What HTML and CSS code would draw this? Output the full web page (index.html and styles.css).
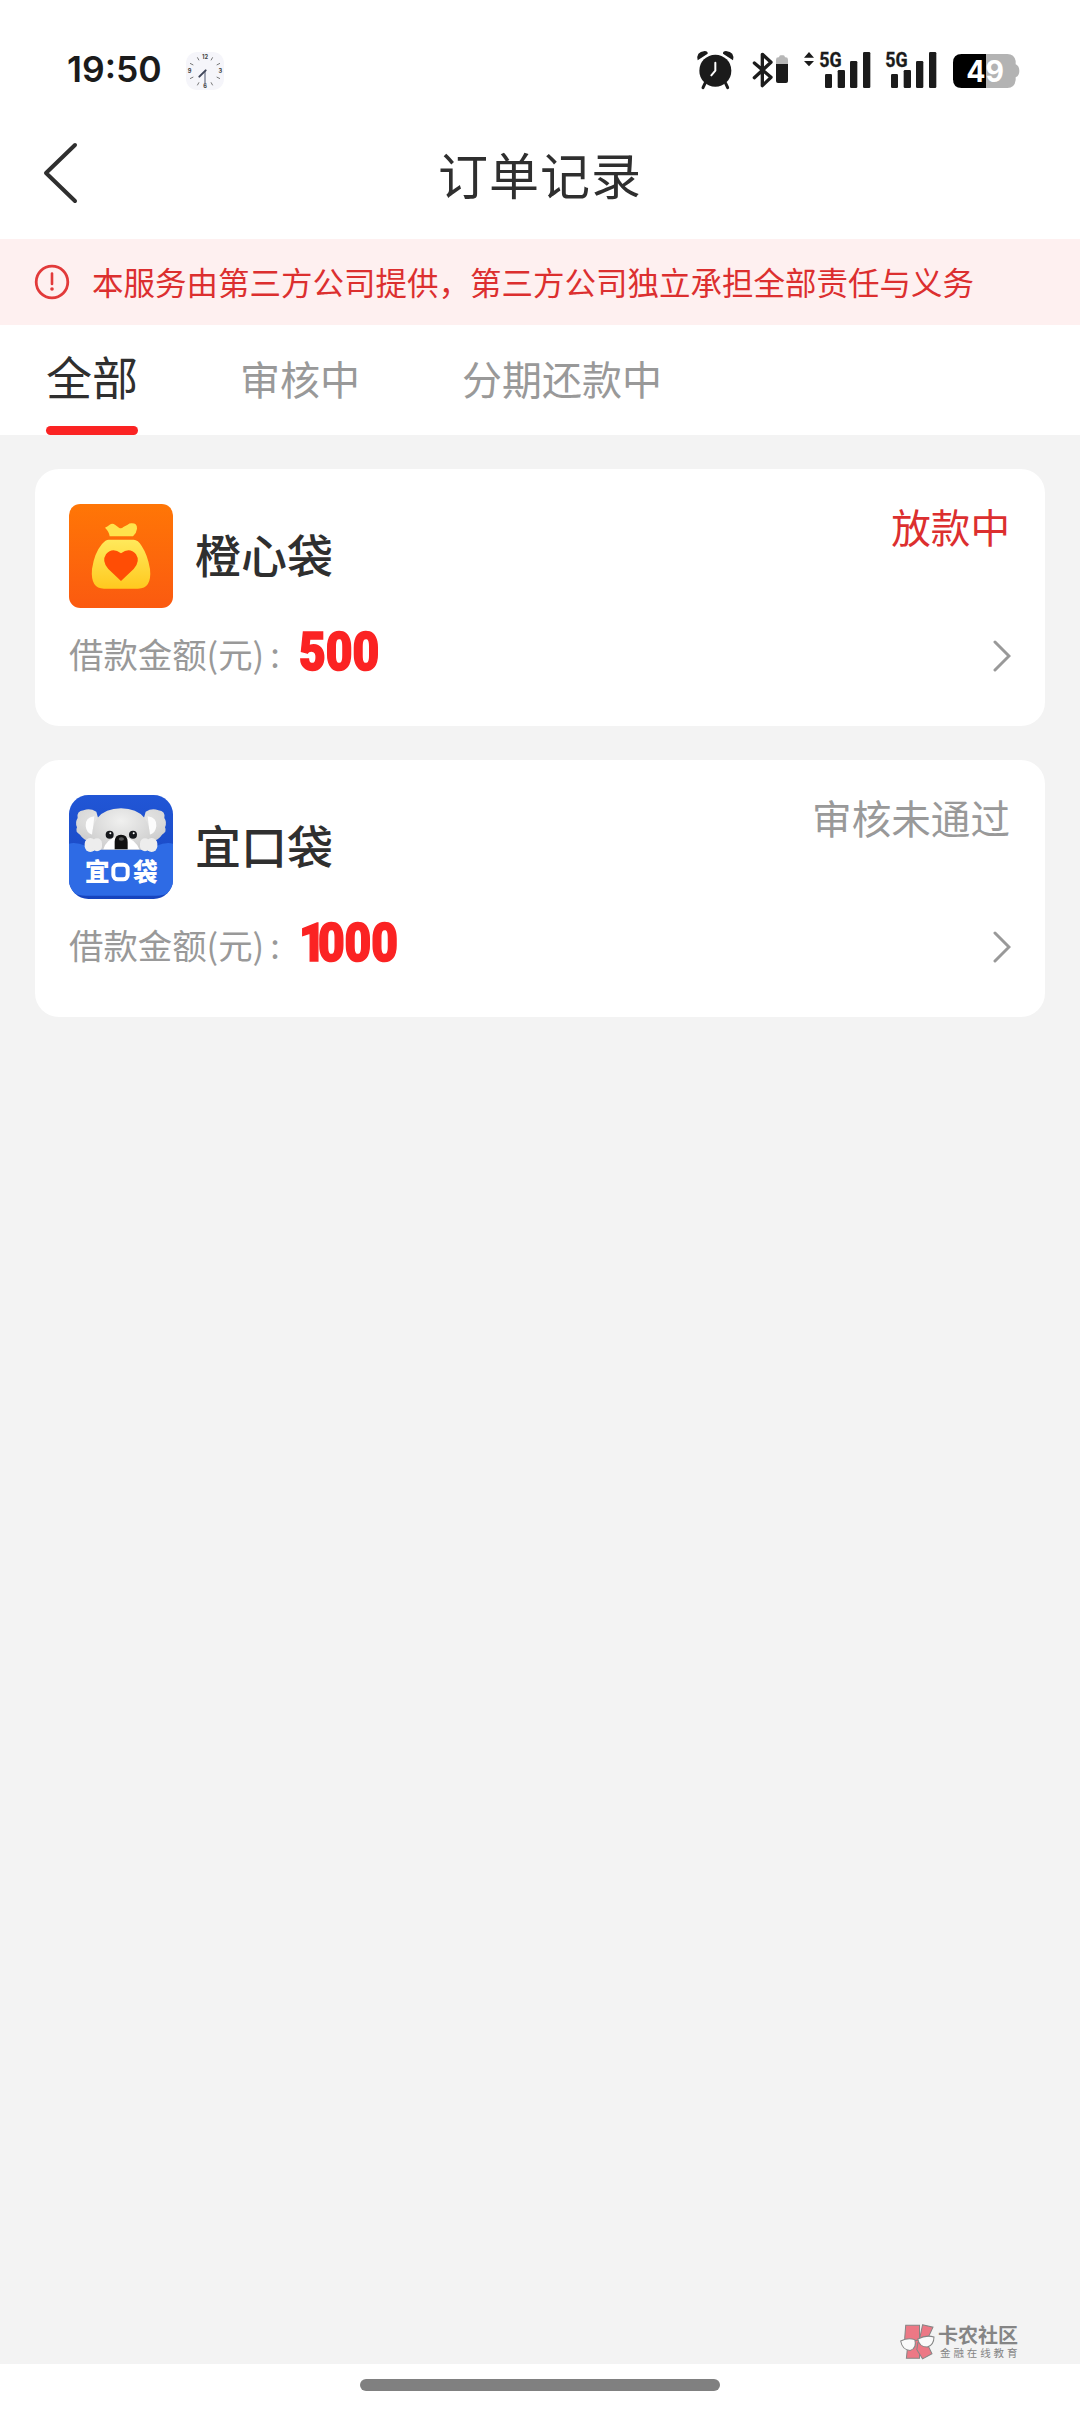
FILE: index.html
```html
<!DOCTYPE html>
<html lang="zh-CN">
<head>
<meta charset="utf-8">
<title>订单记录</title>
<link rel="stylesheet" href="styles.css">
</head>
<body>
<div class="screen">
  <div class="statusbar">
    <span class="time">19:50</span>
    <svg class="clock" viewBox="0 0 114 114">
      <rect width="114" height="114" rx="34" fill="#f5f5fa"/>
      <g stroke="#777" stroke-width="3"><path d="M34 16l5 9M80 16l-5 9M12 34l10 5M102 34l-10 5M12 80l10-5M102 80l-10-5M34 100l5-9M80 100l-5-9"/></g>
      <g class="dial"><text x="57" y="21">12</text><text x="103" y="63">3</text><text x="57" y="108">6</text><text x="11" y="63">9</text></g>
      <path d="M57 57V98" stroke="#777d92" stroke-width="4"/><path d="M59 55L40 74" stroke="#40465a" stroke-width="6" stroke-linecap="round"/>
    </svg>
    <svg class="indicators" viewBox="0 0 1080 210">
      <g fill="#1b1b1b">
        <circle cx="106" cy="107" r="48"/>
        <path d="M53 76Q47 51 74 48Q84 49 83 56ZM159 76Q165 51 138 48Q128 49 129 56Z"/>
        <path d="M75 145l-6 13M137 145l6 13" stroke="#1b1b1b" stroke-width="9" stroke-linecap="round"/>
      </g>
      <path d="M106 83v24L94 121" fill="none" stroke="#fff" stroke-width="6" stroke-linecap="round" stroke-linejoin="round"/>
      <path d="M223 84L273 127L247 152V58L273 82L223 128" fill="none" stroke="#1b1b1b" stroke-width="10" stroke-linecap="round" stroke-linejoin="round"/>
      <path d="M288 88V74Q288 67 295 67H297Q298 61 302 61H310Q314 61 315 67H317Q324 67 324 74V88Z" fill="#b7b7b7"/>
      <path d="M288 87H324V138Q324 144 318 144H294Q288 144 288 138Z" fill="#1b1b1b"/>
      <path d="M372 68L387 51L402 68ZM372 78H402L387 94Z" fill="#1b1b1b"/>
      <g class="network"><text x="418" y="95" textLength="67" lengthAdjust="spacingAndGlyphs">5G</text><text x="616" y="95" textLength="67" lengthAdjust="spacingAndGlyphs">5G</text></g>
      <g fill="#1b1b1b">
        <rect x="435" y="117" width="21" height="42" rx="4"/><rect x="473" y="105" width="22" height="54" rx="4"/><rect x="510" y="78" width="22" height="81" rx="4"/><rect x="549" y="51" width="22" height="108" rx="4"/>
        <rect x="633" y="117" width="21" height="42" rx="4"/><rect x="671" y="105" width="22" height="54" rx="4"/><rect x="708" y="78" width="22" height="81" rx="4"/><rect x="747" y="51" width="22" height="108" rx="4"/>
      </g>
      <path d="M918 57H982Q1003 57 1007 78V88Q1018 92 1018 108Q1018 122 1007 127V135Q1004 159 982 159H918Z" fill="#b3b3b3"/>
      <path d="M918 57H845Q819 57 819 83V133Q819 159 845 159H918Z" fill="#000"/>
      <text class="charge" x="859" y="141" textLength="113" lengthAdjust="spacingAndGlyphs">49</text>
    </svg>
  </div>

  <header class="navbar">
    <svg class="back" viewBox="0 0 36 62"><path d="M33 3L4 31L33 59" /></svg>
    <h1 class="title">订单记录</h1>
  </header>

  <div class="notice">
    <svg class="notice-icon" viewBox="0 0 36 36"><circle cx="18" cy="18" r="15.8" fill="none" stroke="#e23a3a" stroke-width="2.8"/><path d="M18 9.5V20" stroke="#e23a3a" stroke-width="2.6" stroke-linecap="round"/><circle cx="18" cy="25" r="1.8" fill="#e23a3a"/></svg>
    <span>本服务由第三方公司提供，第三方公司独立承担全部责任与义务</span>
  </div>

  <nav class="tabs">
    <span class="tab active">全部</span>
    <span class="tab">审核中</span>
    <span class="tab">分期还款中</span>
  </nav>

  <main class="orders">
    <article class="card">
      <div class="card-head">
        <svg class="logo" viewBox="0 0 312 312">
          <defs>
            <linearGradient id="orange" x2="0" y2="1"><stop stop-color="#ff7606"/><stop offset="1" stop-color="#fb5a10"/></linearGradient>
            <linearGradient id="gold" x2="0" y2="1"><stop stop-color="#ffe95b"/><stop offset="1" stop-color="#ffc91f"/></linearGradient>
          </defs>
          <rect width="312" height="312" rx="34" fill="url(#orange)"/>
          <path d="M108 71Q117 67 122 62Q130 56 138 62L150 71Q157 75 163 69L176 62Q182 57 189 58Q205 58 204 74Q203 86 192 97H122Q121 84 108 71Z" fill="#ffe34c"/>
          <path d="M119 107H194Q207 107 218 126Q236 153 243 195Q249 254 207 254H105Q64 254 69 195Q76 147 99 120Q110 107 119 107Z" fill="url(#gold)"/>
          <path d="M156 231L118 195Q97 172 111 151Q130 128 156 148Q182 128 201 151Q215 172 194 195Z" fill="#ff4d05"/>
        </svg>
        <h2 class="name">橙心袋</h2>
        <span class="state paying">放款中</span>
      </div>
      <div class="card-row">
        <span class="label">借款金额(元)<i>:</i></span>
        <strong class="amount">500</strong>
        <svg class="more" viewBox="0 0 18 32"><path d="M2 2L16 16L2 30"/></svg>
      </div>
    </article>

    <article class="card">
      <div class="card-head">
        <svg class="logo" viewBox="0 0 312 312">
          <defs>
            <linearGradient id="navy" x2="0" y2="1"><stop stop-color="#2156d6"/><stop offset="1" stop-color="#1744bd"/></linearGradient>
            <radialGradient id="fur" cx=".5" cy=".3" r=".7"><stop stop-color="#f0f0ef"/><stop offset="1" stop-color="#cfcfcf"/></radialGradient>
            <clipPath id="tile"><rect width="312" height="312" rx="58"/></clipPath>
          </defs>
          <g clip-path="url(#tile)">
            <rect width="312" height="312" fill="url(#navy)"/>
            <path d="M0 146Q20 140 50 152H262Q292 140 312 146V270Q306 302 262 302H50Q6 302 0 270Z" fill="#2e6be5"/>
            <path d="M82 50Q62 38 44 46Q22 48 26 69Q17 82 24 97Q17 111 33 119Q45 138 64 137L100 115ZM230 50Q250 38 268 46Q290 48 286 69Q295 82 288 97Q295 111 279 119Q267 138 248 137L212 115Z" fill="url(#fur)"/>
            <path d="M76 64Q48 68 50 93Q52 114 70 119ZM236 64Q264 68 262 93Q260 114 242 119Z" fill="#fcfcfc"/>
            <path d="M70 148Q60 42 156 40Q252 42 242 148V164H70Z" fill="url(#fur)"/>
            <path d="M103 163Q112 132 145 125H167Q201 134 211 163Z" fill="#fff"/>
            <g fill="#ededed"><rect x="47" y="129" width="34" height="42" rx="17"/><rect x="69" y="130" width="30" height="39" rx="15"/><rect x="213" y="130" width="30" height="39" rx="15"/><rect x="231" y="129" width="34" height="42" rx="17"/></g>
            <circle cx="122" cy="119" r="12" fill="#15171b"/><circle cx="192" cy="119" r="12" fill="#15171b"/><circle cx="124" cy="115" r="3" fill="#fff"/><circle cx="194" cy="115" r="3" fill="#fff"/>
            <path d="M137 163V141Q137 119 156 119Q176 119 176 141V163Z" fill="#111"/><ellipse cx="157" cy="132" rx="8" ry="5" fill="#555"/>
            <g class="brand"><text x="48" y="259">宜</text><text x="192" y="259">袋</text></g>
            <rect x="133" y="209" width="43" height="44" rx="13" fill="none" stroke="#fff" stroke-width="12"/>
          </g>
        </svg>
        <h2 class="name">宜口袋</h2>
        <span class="state">审核未通过</span>
      </div>
      <div class="card-row">
        <span class="label">借款金额(元)<i>:</i></span>
        <strong class="amount"><span class="one">1</span>000</strong>
        <svg class="more" viewBox="0 0 18 32"><path d="M2 2L16 16L2 30"/></svg>
      </div>
    </article>
  </main>

  <div class="watermark">
    <svg class="mark" viewBox="0 0 104 106">
      <g stroke="#858585" stroke-width="3" fill="#ec7885"><path d="M17 3H58V101H19L22 72L14 42Z"/><path d="M67 2L98 9L80 48L58 45ZM53 55L77 50L95 88L67 103L50 76Z"/></g>
      <path d="M2 50Q24 39 44 46Q51 72 30 78Q7 77 2 50ZM53 44Q77 31 101 38Q101 62 81 68Q57 68 53 44ZM44 49L54 47" fill="#fafafa" stroke="#858585" stroke-width="3"/>
    </svg>
    <div class="mark-text"><b>卡农社区</b><span>金融在线教育</span></div>
  </div>

  <footer class="homebar"><div class="pill"></div></footer>
</div>
</body>
</html>
```
FILE: styles.css
```css
* { box-sizing: border-box; }
body {
  margin: 0;
  background: #fff;
  color: #2f2f2f;
  font-family: "Noto Sans CJK SC", sans-serif;
}
svg { display: block; flex: none; }
h1, h2 { margin: 0; font-weight: 400; }
.screen {
  position: relative;
  width: 1080px;
  height: 2412px;
  display: flex;
  flex-direction: column;
  overflow: hidden;
}

/* System status bar */
.statusbar {
  height: 140px;
  padding: 0 40px 0 67px;
  display: flex;
  align-items: center;
}
.time {
  width: 119px;
  font: 600 35.5px/44px Inter, sans-serif;
  color: #1b1b1b;
}
.clock { width: 38px; height: 38px; margin-top: 2px; }
.dial { font: 700 17px Inter, sans-serif; text-anchor: middle; fill: #444; }
.indicators { width: 360px; height: 70px; margin-left: auto; }
.network { font: 700 58px Roboto, sans-serif; fill: #1b1b1b; stroke: #1b1b1b; stroke-width: 1; }
.charge { font: 700 88px Inter, sans-serif; fill: #fff; }

/* Page header */
.navbar {
  height: 99px;
  display: grid;
  grid-template-columns: 120px 1fr 120px;
  padding-bottom: 33px;
  align-items: center;
}
.back { width: 36px; height: 62px; margin-left: 42px; fill: none; stroke: #2f2f2f; stroke-width: 4; stroke-linecap: round; stroke-linejoin: round; }
.title { font-size: 50px; line-height: 66px; letter-spacing: 1px; text-align: center; }

.notice {
  height: 86px;
  padding-left: 34px;
  display: flex;
  align-items: center;
  gap: 22px;
  background: #fef0f0;
  color: #dc2f2f;
  font-size: 31.5px;
  line-height: 46px;
  white-space: nowrap;
}
.notice span { padding-bottom: 2px; }
.notice-icon { width: 36px; height: 36px; }

.tabs {
  height: 110px;
  padding-left: 46px;
  display: flex;
  gap: 102px;
}
.tab { height: 110px; font-size: 40px; line-height: 107px; color: #999; }
.tab.active { font-size: 46px; line-height: 101px; color: #2f2f2f; display: flex; flex-direction: column; }
.tab.active::after { content: ""; flex: none; height: 9px; border-radius: 5px; background: #fb2323; }

/* Order list */
.orders {
  flex: 1;
  padding: 34px 35px;
  display: flex;
  flex-direction: column;
  gap: 34px;
  background: #f3f3f3;
}
.card { height: 257px; padding: 35px 34px 0; border-radius: 24px; background: #fff; }
.card-head { height: 104px; display: flex; align-items: center; }
.logo { width: 104px; height: 104px; }
.brand { font: 900 74px "Noto Sans CJK SC", sans-serif; fill: #fff; }
.name { margin-left: 22px; padding-bottom: 6px; font-size: 46px; line-height: 64px; font-weight: 500; }
.state { margin-left: auto; margin-right: 1px; align-self: flex-start; font-size: 39.6px; line-height: 43px; color: #999; }
.paying { color: #dc2f2f; }
.card-row { height: 96px; display: flex; align-items: center; }
.label { width: 230px; padding-bottom: 6px; font-size: 34.4px; line-height: 50px; color: #999; white-space: nowrap; }
.label i { font-style: normal; margin-left: 6px; }
.amount {
  padding-bottom: 8px;
  font: 900 53px/60px Roboto, sans-serif;
  color: #fb2323;
  -webkit-text-stroke: 1.6px #fb2323;
  transform: scaleX(.87);
  transform-origin: left;
}
.one { letter-spacing: -9px; }
.more { width: 18px; height: 32px; margin-left: auto; fill: none; stroke: #999; stroke-width: 3; stroke-linecap: round; }

.watermark { position: absolute; left: 900px; top: 2324px; display: flex; gap: 3px; color: #858585; }
.mark { width: 35px; height: 36px; }
.mark-text { display: flex; flex-direction: column; }
.mark-text b { font-size: 20px; line-height: 22px; font-weight: 700; }
.mark-text span { margin-left: 2px; font-size: 10.5px; line-height: 14px; letter-spacing: 2.9px; }

.homebar { height: 48px; padding-top: 15px; background: #fff; }
.pill { width: 360px; height: 12px; margin: 0 auto; border-radius: 6px; background: #808080; }
```
